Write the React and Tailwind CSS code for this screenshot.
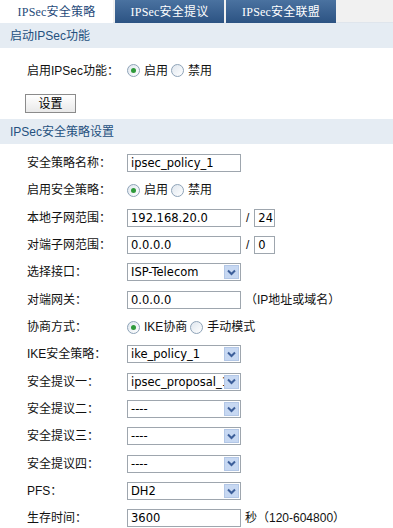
import React from "react";

const BASE = { fontFamily: '"Liberation Sans", Arial, "Noto Sans CJK SC", sans-serif' };
const FIELD = { fontFamily: '"DejaVu Sans", Verdana, "Noto Sans CJK SC", sans-serif' };
const TAB = { fontFamily: '"Liberation Serif", "Noto Sans CJK SC", serif' };

function Radio({ checked }) {
  return (
    <span className="inline-flex items-center justify-center w-[13px] h-[13px] rounded-full border border-[#8ea3b8] bg-gradient-to-br from-[#dfe6ee] to-white mr-[4px]">
      {checked && <span className="w-[5px] h-[5px] rounded-full bg-[#2f9a3a]" />}
    </span>
  );
}

function Input({ value, w = "w-[114px]" }) {
  return (
    <div className={`${w} h-[18px] border border-[#9ea6ae] bg-white flex items-center pl-[3px] text-[11.5px] text-black leading-[16px] overflow-hidden whitespace-nowrap`} style={FIELD}>
      {value}
    </div>
  );
}

function Select({ value }) {
  return (
    <div className="w-[114px] h-[18px] border border-[#9ea6ae] bg-white flex items-center text-[11.5px] text-black leading-[16px]" style={FIELD}>
      <div className="flex-1 pl-[3px] overflow-hidden whitespace-nowrap">{value}</div>
      <div className="w-[15px] h-[14px] mr-[1px] bg-[#c7d8f2] border border-[#b3c7e6] flex items-center justify-center">
        <svg width="9" height="7" viewBox="0 0 9 7">
          <path d="M1 1.5 L4.5 5 L8 1.5" fill="none" stroke="#3d5f9a" strokeWidth="2" />
        </svg>
      </div>
    </div>
  );
}

function Row({ label, children }) {
  return (
    <div className="h-[27.35px] flex items-center text-[12px] text-[#111]">
      <div className="w-[127px] pl-[27px] whitespace-nowrap">{label}</div>
      <div className="flex items-center">{children}</div>
    </div>
  );
}

function Header({ children }) {
  return (
    <div className="h-[25px] bg-[#e5ecf3] flex items-center pl-[10px] text-[12px] text-[#24507e]">
      {children}
    </div>
  );
}

export default function App() {
  return (
    <div className="w-[393px] h-[528px] bg-white overflow-hidden" style={BASE}>
      <div className="h-[23px] flex bg-[#f1f1f1] border-b border-[#dfe5ec]">
        <div className="w-[113px] h-[23px] bg-white flex items-center justify-center text-[12px] text-[#1f4a7a] tracking-[0.2px]" style={TAB}>
          IPSec安全策略
        </div>
        <div className="w-[2px]" />
        <div className="w-[109px] h-[23px] bg-gradient-to-b from-[#4a72a0] to-[#2c5383] flex items-center justify-center text-[12px] text-white tracking-[0.2px]" style={TAB}>
          IPSec安全提议
        </div>
        <div className="w-[2px]" />
        <div className="w-[110px] h-[23px] bg-gradient-to-b from-[#4a72a0] to-[#2c5383] flex items-center justify-center text-[12px] text-white tracking-[0.2px]" style={TAB}>
          IPSec安全联盟
        </div>
      </div>
      <Header>启动IPSec功能</Header>
      <div className="h-[9px]" />
      <Row label="启用IPSec功能：">
        <Radio checked />
        <span className="mr-[3px]">启用</span>
        <Radio />
        <span>禁用</span>
      </Row>
      <div className="h-[10px]" />
      <div className="pl-[25px]">
        <button className="w-[51px] h-[19px] border border-[#8b8b8b] bg-gradient-to-b from-white to-[#e9e9e9] text-[12px] text-black flex items-center justify-center">
          设置
        </button>
      </div>
      <div className="h-[6px]" />
      <Header>IPSec安全策略设置</Header>
      <div className="h-[5px]" />
      <Row label="安全策略名称："><Input value="ipsec_policy_1" /></Row>
      <Row label="启用安全策略：">
        <Radio checked />
        <span className="mr-[3px]">启用</span>
        <Radio />
        <span>禁用</span>
      </Row>
      <Row label="本地子网范围：">
        <Input value="192.168.20.0" />
        <span className="mx-[5px]">/</span>
        <Input value="24" w="w-[21px]" />
      </Row>
      <Row label="对端子网范围：">
        <Input value="0.0.0.0" />
        <span className="mx-[5px]">/</span>
        <Input value="0" w="w-[21px]" />
      </Row>
      <Row label="选择接口："><Select value="ISP-Telecom" /></Row>
      <Row label="对端网关：">
        <Input value="0.0.0.0" />
        <span className="ml-[4px]">（IP地址或域名）</span>
      </Row>
      <Row label="协商方式：">
        <Radio checked />
        <span className="mr-[3px]">IKE协商</span>
        <Radio />
        <span>手动模式</span>
      </Row>
      <Row label="IKE安全策略："><Select value="ike_policy_1" /></Row>
      <Row label="安全提议一："><Select value="ipsec_proposal_1" /></Row>
      <Row label="安全提议二："><Select value="----" /></Row>
      <Row label="安全提议三："><Select value="----" /></Row>
      <Row label="安全提议四："><Select value="----" /></Row>
      <Row label="PFS："><Select value="DH2" /></Row>
      <Row label="生存时间：">
        <Input value="3600" />
        <span className="ml-[4px]">秒（120-604800）</span>
      </Row>
    </div>
  );
}
